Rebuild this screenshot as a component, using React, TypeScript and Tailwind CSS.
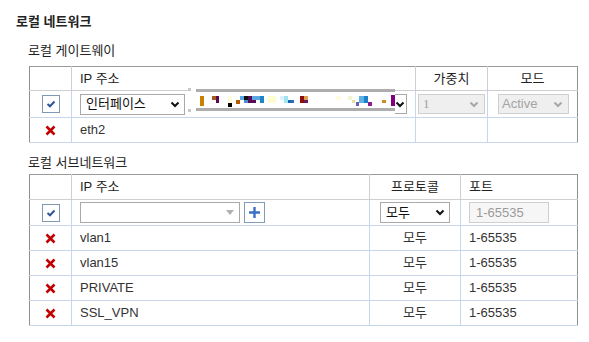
const font = "font-['Liberation_Sans','Noto_Sans_CJK_KR',sans-serif]"

const Chevron = ({ color = "#111" }: { color?: string }) => (
  <svg width="10" height="7" viewBox="0 0 10 7" className="shrink-0">
    <path d="M1.5 1.5 L5 5 L8.5 1.5" fill="none" stroke={color} strokeWidth="2" />
  </svg>
)

const Check = () => (
  <div className="mx-auto flex h-[18px] w-[18px] items-center justify-center border border-[#8199b0] bg-white">
    <svg width="10" height="8" viewBox="0 0 10 8">
      <path d="M1.5 4 L4 6.3 L8.5 1.5" fill="none" stroke="#2f5597" strokeWidth="2" />
    </svg>
  </div>
)

const Del = () => (
  <svg width="11" height="11" viewBox="0 0 11 11" className="mx-auto block">
    <path d="M1.5 1.5 L9.5 9.5 M9.5 1.5 L1.5 9.5" stroke="#c00000" strokeWidth="2.5" />
  </svg>
)

// pixel mosaic over the masked address field
const blocks: [number, number, number, number, string][] = [
  [14, 8, 4, 10, "#c98200"],
  [26, 8, 4, 4, "#a65a1e"],
  [30, 8, 3, 7, "#5a0a55"],
  [42, 8, 4, 7, "#fffcd8"],
  [42, 15, 4, 4, "#000000"],
  [50, 12, 4, 4, "#b35c00"],
  [54, 8, 4, 4, "#5ca8e6"],
  [58, 8, 4, 4, "#111111"],
  [58, 12, 4, 3, "#4a8fd8"],
  [62, 8, 4, 7, "#5a0a55"],
  [66, 12, 4, 3, "#5a0a55"],
  [66, 8, 8, 4, "#5aa9e6"],
  [74, 8, 4, 7, "#1a86c8"],
  [82, 8, 8, 7, "#fffcd0"],
  [94, 8, 4, 4, "#d6f3f8"],
  [98, 8, 4, 4, "#a0e2f2"],
  [98, 12, 4, 3, "#a0e8f0"],
  [102, 12, 4, 3, "#1565b0"],
  [105, 12, 3, 3, "#2a6fb8"],
  [114, 8, 4, 7, "#8b0d0d"],
  [118, 8, 4, 4, "#d8a050"],
  [118, 12, 4, 3, "#6a1a5a"],
  [150, 8, 5, 4, "#fffce0"],
  [162, 8, 4, 4, "#f0f4d0"],
  [166, 12, 3, 3, "#e6e0a0"],
  [170, 14, 3, 4, "#6060c0"],
  [173, 8, 5, 7, "#60b0e8"],
  [178, 8, 4, 7, "#1e80c8"],
  [182, 14, 4, 4, "#8b1a8b"],
  [196, 12, 4, 3, "#d08a20"],
  [205, 7, 4, 11, "#800080"],
]

const Mosaic = () => (
  <svg width="212" height="30" viewBox="0 0 212 30" className="absolute left-[-5px] top-[-7px]">
    <rect x="3" y="0" width="206" height="29" fill="#ffffff" />
    <rect x="2" y="0" width="3" height="3" fill="#c8c8c8" />
    <rect x="2" y="21" width="3" height="3" fill="#c8c8c8" />
    <rect x="10" y="1" width="199" height="3" fill="#adadad" />
    <rect x="10" y="20" width="199" height="3" fill="#adadad" />
    {blocks.map(([x, y, w, h, c], i) => (
      <rect key={i} x={x} y={y} width={w} height={h} fill={c} />
    ))}
  </svg>
)

const th = "border-r border-b border-[#cfcfcf] last:border-r-0 font-normal text-[#222] px-2"
const td = "border-r border-b border-[#c8d6ec] last:border-r-0 px-2 text-[#333]"

const rows = ["vlan1", "vlan15", "PRIVATE", "SSL_VPN"]

export default function App() {
  return (
    <div className={`h-[342px] w-[589px] bg-white pl-4 pt-3 text-[13px] ${font}`}>
      <h1 className="text-[13px] font-bold leading-[20px] text-[#222]">로컬 네트워크</h1>

      <div className="ml-3 mt-[10px] text-[13px] leading-[18px] text-[#222]">로컬 게이트웨이</div>
      <table className="ml-[13px] mt-[6px] w-[548px] table-fixed border-collapse border-x border-t border-b border-x-[#8f8f8f] border-t-[#9a9a9a] border-b-[#c8d6ec]">
        <colgroup>
          <col className="w-[42px]" />
          <col className="w-[344px]" />
          <col className="w-[72px]" />
          <col className="w-[90px]" />
        </colgroup>
        <thead>
          <tr className="h-[24px]">
            <th className={th}></th>
            <th className={`${th} text-left`}>IP 주소</th>
            <th className={`${th} text-center`}>가중치</th>
            <th className={`${th} text-center`}>모드</th>
          </tr>
        </thead>
        <tbody>
          <tr className="h-[27px]">
            <td className={`${td} px-0`}><Check /></td>
            <td className={td}>
              <div className="flex items-center gap-[5px]">
                <div className="flex h-[21px] w-[105px] items-center justify-between border border-[#a9a9a9] pl-[5px] pr-[4px] text-[#111]">
                  <span>인터페이스</span>
                  <Chevron />
                </div>
                <div className="relative flex h-[20px] w-[218px] items-center justify-end border border-[#a9a9a9] pr-[1px]">
                  <Mosaic />
                  <span className="relative"><Chevron /></span>
                </div>
              </div>
            </td>
            <td className={`${td} px-[2px]`}>
              <div className="flex h-[20px] w-[67px] items-center justify-between border border-[#cfcfcf] bg-[#efefef] pl-[4px] pr-[5px] text-[#a3a3a3]">
                <span className="font-['Liberation_Serif']">1</span>
                <Chevron color="#a8a8a8" />
              </div>
            </td>
            <td className={`${td} px-[10px]`}>
              <div className="flex h-[20px] w-[71px] items-center justify-between border border-[#cfcfcf] bg-[#efefef] pl-[3px] pr-[5px] text-[#a3a3a3]">
                <span>Active</span>
                <Chevron color="#a8a8a8" />
              </div>
            </td>
          </tr>
          <tr className="h-[25px]">
            <td className={`${td} px-0`}><Del /></td>
            <td className={td}>eth2</td>
            <td className={td}></td>
            <td className={td}></td>
          </tr>
        </tbody>
      </table>

      <div className="ml-3 mt-[11px] text-[13px] leading-[18px] text-[#222]">로컬 서브네트워크</div>
      <table className="ml-[13px] mt-[2px] w-[548px] table-fixed border-collapse border-x border-t border-b border-x-[#8f8f8f] border-t-[#9a9a9a] border-b-[#c8d6ec]">
        <colgroup>
          <col className="w-[42px]" />
          <col className="w-[298px]" />
          <col className="w-[91px]" />
          <col className="w-[117px]" />
        </colgroup>
        <thead>
          <tr className="h-[25px]">
            <th className={th}></th>
            <th className={`${th} text-left`}>IP 주소</th>
            <th className={`${th} text-center`}>프로토콜</th>
            <th className={`${th} text-left`}>포트</th>
          </tr>
        </thead>
        <tbody>
          <tr className="h-[26px]">
            <td className={`${td} px-0`}><Check /></td>
            <td className={td}>
              <div className="flex items-center gap-[4px]">
                <div className="flex h-[21px] w-[160px] items-center justify-end border border-[#a9a9a9] pr-[5px]">
                  <svg width="8" height="5" viewBox="0 0 8 5">
                    <path d="M0 0 L8 0 L4 5 Z" fill="#b0b0b0" />
                  </svg>
                </div>
                <div className="flex h-[21px] w-[21px] items-center justify-center border border-[#7f9db9] bg-white">
                  <svg width="13" height="13" viewBox="0 0 13 13">
                    <path d="M6.5 1 V12 M1 6.5 H12" stroke="#3a6fc6" strokeWidth="2.4" />
                  </svg>
                </div>
              </div>
            </td>
            <td className={`${td} px-[10px]`}>
              <div className="flex h-[21px] w-[70px] items-center justify-between border border-[#a9a9a9] pl-[5px] pr-[4px] text-[#111]">
                <span>모두</span>
                <Chevron />
              </div>
            </td>
            <td className={td}>
              <div className="flex h-[21px] w-[80px] items-center border border-[#cfcfcf] bg-[#f6f6f6] pl-[6px] text-[#9a9a9a]">
                1-65535
              </div>
            </td>
          </tr>
          {rows.map((r) => (
            <tr key={r} className="h-[25px]">
              <td className={`${td} px-0`}><Del /></td>
              <td className={td}>{r}</td>
              <td className={`${td} text-center`}>모두</td>
              <td className={td}>1-65535</td>
            </tr>
          ))}
        </tbody>
      </table>
    </div>
  )
}
